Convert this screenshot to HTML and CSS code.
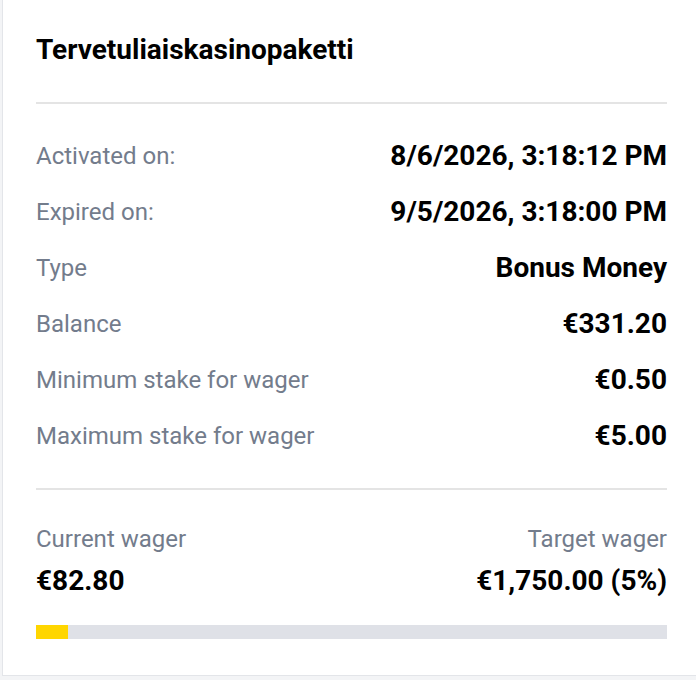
FILE: index.html
```html
<!DOCTYPE html>
<html lang="en">
<head>
  <meta charset="UTF-8">
  <meta name="viewport" content="width=device-width, initial-scale=1.0">
  <title>Bonus details</title>
  <link rel="stylesheet" href="styles.css">
</head>
<body>
  <div class="bonus-card">
    <h2 class="bonus-title">Tervetuliaiskasinopaketti</h2>

    <!-- Bonus details -->
    <div class="bonus-details">
      <div class="detail-row">
        <span class="detail-label">Activated on:</span>
        <span class="detail-value">8/6/2026, 3:18:12 PM</span>
      </div>
      <div class="detail-row">
        <span class="detail-label">Expired on:</span>
        <span class="detail-value">9/5/2026, 3:18:00 PM</span>
      </div>
      <div class="detail-row">
        <span class="detail-label">Type</span>
        <span class="detail-value">Bonus Money</span>
      </div>
      <div class="detail-row">
        <span class="detail-label">Balance</span>
        <span class="detail-value">€331.20</span>
      </div>
      <div class="detail-row">
        <span class="detail-label">Minimum stake for wager</span>
        <span class="detail-value">€0.50</span>
      </div>
      <div class="detail-row">
        <span class="detail-label">Maximum stake for wager</span>
        <span class="detail-value">€5.00</span>
      </div>
    </div>

    <!-- Wager progress -->
    <div class="wager">
      <div class="wager-labels">
        <span class="detail-label">Current wager</span>
        <span class="detail-label">Target wager</span>
      </div>
      <div class="wager-values">
        <span class="detail-value">€82.80</span>
        <span class="detail-value">€1,750.00 (5%)</span>
      </div>
      <div class="progress">
        <div class="progress-fill" style="width: 5%;"></div>
      </div>
    </div>
  </div>
</body>
</html>
```

FILE: styles.css
```css
html,
body {
  overflow: hidden;
}

body {
  font-family: Roboto, "Liberation Sans", Arial, sans-serif;
  background-color: #f3f4f6;
  margin: 0;
  padding: 0;
}

.bonus-card {
  background-color: white;
  margin-left: 2px;
  width: 631px;
  padding: 33px 33px 36px;
  border: 1px solid #e3e5e9;
  border-top: none;
}

.bonus-title {
  margin: 0;
  font-size: 28px;
  line-height: 33px;
  font-weight: 700;
  color: #000;
}

.bonus-details {
  margin-top: 36px;
  padding: 24px 0;
  border-top: 2px solid #e4e4e4;
  border-bottom: 2px solid #e4e4e4;
}

.detail-row {
  display: flex;
  justify-content: space-between;
  align-items: center;
  height: 56px;
}

.detail-label {
  font-size: 24px;
  line-height: 32px;
  color: #737c8c;
}

.detail-value {
  font-size: 28px;
  line-height: 32px;
  font-weight: 700;
  color: #000;
}

.wager {
  padding-top: 33px;
}

.wager-labels,
.wager-values {
  display: flex;
  justify-content: space-between;
}

.wager-values {
  margin-top: 10px;
}

.progress {
  margin-top: 28px;
  height: 14px;
  background-color: #dfe1e7;
}

.progress-fill {
  height: 100%;
  background-color: #ffd600;
}
```
